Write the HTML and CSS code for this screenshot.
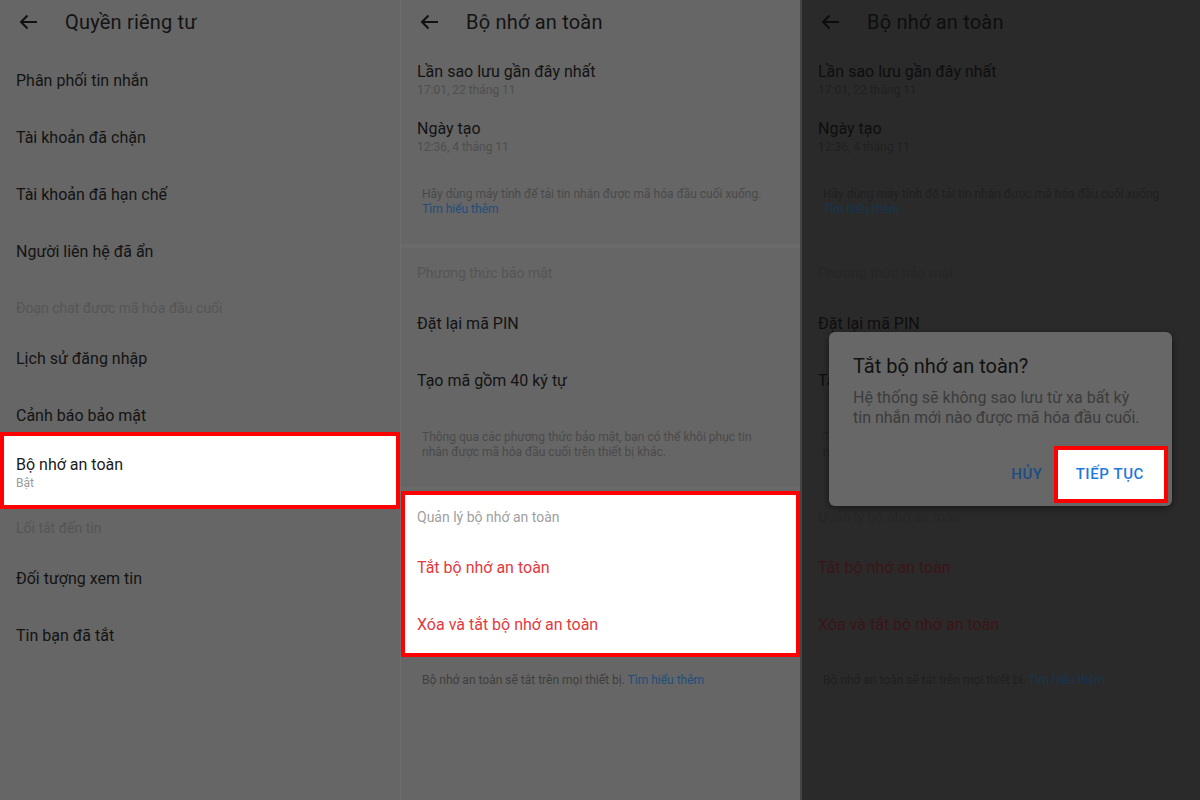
FILE: index.html
```html
<!DOCTYPE html>
<html lang="vi">
<head>
    <meta charset="UTF-8">
    <meta name="viewport" content="width=device-width, initial-scale=1.0">
    <title>Bộ nhớ an toàn</title>
    <link rel="stylesheet" href="styles.css">
</head>
<body>
    <div class="screens">

        <!-- Step 1: privacy list -->
        <section class="panel">
            <header class="topbar">
                <svg class="back" width="24" height="24" viewBox="0 0 24 24"><path d="M21 12H5M11.5 5.5L5 12l6.5 6.5" fill="none" stroke="currentColor" stroke-width="2"/></svg>
                <h1>Quyền riêng tư</h1>
            </header>
            <div class="settings">
                <div class="row">Phân phối tin nhắn</div>
                <div class="row">Tài khoản đã chặn</div>
                <div class="row">Tài khoản đã hạn chế</div>
                <div class="row">Người liên hệ đã ẩn</div>
                <div class="group">Đoạn chat được mã hóa đầu cuối</div>
                <div class="row">Lịch sử đăng nhập</div>
                <div class="row short">Cảnh báo bảo mật</div>
                <div class="pick">
                    <div class="pick-title">Bộ nhớ an toàn</div>
                    <div class="pick-sub">Bật</div>
                </div>
                <div class="group tight">Lối tắt đến tin</div>
                <div class="row">Đối tượng xem tin</div>
                <div class="row">Tin bạn đã tắt</div>
            </div>
        </section>

        <!-- Step 2: secure storage -->
        <section class="panel">
            <header class="topbar">
                <svg class="back" width="24" height="24" viewBox="0 0 24 24"><path d="M21 12H5M11.5 5.5L5 12l6.5 6.5" fill="none" stroke="currentColor" stroke-width="2"/></svg>
                <h1>Bộ nhớ an toàn</h1>
            </header>
            <div class="settings">
                <div class="entry">
                    <div class="name">Lần sao lưu gần đây nhất</div>
                    <div class="meta">17:01, 22 tháng 11</div>
                </div>
                <div class="entry">
                    <div class="name">Ngày tạo</div>
                    <div class="meta">12:36, 4 tháng 11</div>
                </div>
                <p class="note">Hãy dùng máy tính để tải tin nhắn được mã hóa đầu cuối xuống.<br><span class="link">Tìm hiểu thêm</span></p>
                <div class="rule"></div>
                <div class="group">Phương thức bảo mật</div>
                <div class="row">Đặt lại mã PIN</div>
                <div class="row">Tạo mã gồm 40 ký tự</div>
                <p class="note">Thông qua các phương thức bảo mật, bạn có thể khôi phục tin<br>nhắn được mã hóa đầu cuối trên thiết bị khác.</p>
                <div class="rule"></div>
                <div class="box marked">
                    <div class="group">Quản lý bộ nhớ an toàn</div>
                    <div class="row danger">Tắt bộ nhớ an toàn</div>
                    <div class="row danger">Xóa và tắt bộ nhớ an toàn</div>
                </div>
                <p class="foot">Bộ nhớ an toàn sẽ tắt trên mọi thiết bị. <span class="link">Tìm hiểu thêm</span></p>
            </div>
        </section>

        <!-- Step 3: confirm dialog -->
        <section class="panel dim">
            <header class="topbar">
                <svg class="back" width="24" height="24" viewBox="0 0 24 24"><path d="M21 12H5M11.5 5.5L5 12l6.5 6.5" fill="none" stroke="currentColor" stroke-width="2"/></svg>
                <h1>Bộ nhớ an toàn</h1>
            </header>
            <div class="settings">
                <div class="entry">
                    <div class="name">Lần sao lưu gần đây nhất</div>
                    <div class="meta">17:01, 22 tháng 11</div>
                </div>
                <div class="entry">
                    <div class="name">Ngày tạo</div>
                    <div class="meta">12:36, 4 tháng 11</div>
                </div>
                <p class="note">Hãy dùng máy tính để tải tin nhắn được mã hóa đầu cuối xuống.<br><span class="link">Tìm hiểu thêm</span></p>
                <div class="rule"></div>
                <div class="group">Phương thức bảo mật</div>
                <div class="row">Đặt lại mã PIN</div>
                <div class="row">Tạo mã gồm 40 ký tự</div>
                <p class="note">Thông qua các phương thức bảo mật, bạn có thể khôi phục tin<br>nhắn được mã hóa đầu cuối trên thiết bị khác.</p>
                <div class="rule"></div>
                <div class="box">
                    <div class="group">Quản lý bộ nhớ an toàn</div>
                    <div class="row danger">Tắt bộ nhớ an toàn</div>
                    <div class="row danger">Xóa và tắt bộ nhớ an toàn</div>
                </div>
                <p class="foot">Bộ nhớ an toàn sẽ tắt trên mọi thiết bị. <span class="link">Tìm hiểu thêm</span></p>
            </div>

            <div class="dialog">
                <h2>Tắt bộ nhớ an toàn?</h2>
                <p>Hệ thống sẽ không sao lưu từ xa bất kỳ<br>tin nhắn mới nào được mã hóa đầu cuối.</p>
                <div class="actions">
                    <button class="btn">Hủy</button>
                    <button class="btn primary">Tiếp tục</button>
                </div>
            </div>
        </section>

    </div>
</body>
</html>
```

FILE: styles.css
```css
* {
    margin: 0;
    padding: 0;
    box-sizing: border-box;
}

body {
    font-family: Roboto, "Noto Sans", "Liberation Sans", sans-serif;
    width: 1200px;
    height: 800px;
    overflow: hidden;
    background: #666;
}

.screens {
    display: flex;
    height: 800px;
}

.panel {
    position: relative;
    flex: none;
    width: 400px;
    height: 800px;
    background: #666;
    color: #131313;
}

.panel + .panel {
    border-left: 1px solid #6e6e6e;
}

/* header */
.topbar {
    display: flex;
    align-items: center;
    gap: 25px;
    height: 44px;
    padding-left: 16px;
}

.back {
    display: block;
    color: #111;
}

.topbar h1 {
    font-size: 20px;
    font-weight: 400;
    line-height: 24px;
    letter-spacing: 0.2px;
}

/* lists */
.settings {
    padding-top: 8px;
}

.row {
    display: flex;
    align-items: center;
    height: 57px;
    padding: 0 16px;
    font-size: 16px;
}

.row.short {
    height: 45px;
    padding-top: 11px;
}

.group {
    padding: 20px 16px 14px;
    font-size: 14px;
    line-height: 16px;
    color: #555;
}

.group.tight {
    padding-top: 11px;
}

.rule + .group {
    padding-top: 17px;
}

.pick {
    background: #fff;
    border: 4px solid #f00;
    padding: 19px 12px 14px;
}

.pick-title {
    font-size: 16px;
    line-height: 20px;
    color: #1a1a1a;
}

.pick-sub {
    font-size: 12px;
    line-height: 16px;
    color: #9a9a9a;
}

.entry {
    padding: 10px 16px 11px;
}

.entry .name {
    font-size: 16px;
    line-height: 20px;
}

.entry .meta {
    font-size: 12px;
    line-height: 16px;
    color: #4e4e4e;
}

.note {
    padding: 21px 16px 27px 21px;
    font-size: 12px;
    line-height: 15px;
    color: #4a4a4a;
    white-space: nowrap;
}

.link {
    color: #1f4e7c;
}

.rule {
    height: 4px;
    background: #6a6a6a;
}

.box {
    border: 4px solid transparent;
}

.box .row,
.box .group {
    padding-left: 12px;
}

.box .group {
    padding-top: 14px;
}

.box.marked {
    background: #fff;
    border-color: #f00;
}

.box.marked .group {
    color: #a0a0a0;
}

.row.danger {
    color: #e33a40;
}

.foot {
    padding: 16px 16px 0 21px;
    font-size: 12px;
    line-height: 15px;
    color: #3e3e3e;
}

/* dimmed third screen */
.panel.dim {
    background: #2a2a2a;
    color: #0e0e0e;
    border-left: 2px solid #454545;
}

.dim .back {
    color: #0c0c0c;
}

.dim .group {
    color: #262626;
}

.dim .rule {
    background: #2a2a2a;
}

.dim .entry .meta,
.dim .note,
.dim .foot {
    color: #202020;
}

.dim .link {
    color: #173451;
}

.dim .row.danger {
    color: #3c1517;
}

/* confirm dialog */
.dialog {
    position: absolute;
    left: 27px;
    top: 332px;
    width: 343px;
    padding: 22px 4px 3px 24px;
    background: #676767;
    border-radius: 6px;
    box-shadow: 0 2px 6px rgba(0, 0, 0, 0.45);
}

.dialog h2 {
    font-size: 20px;
    font-weight: 400;
    line-height: 24px;
    color: #111;
}

.dialog p {
    margin-top: 10px;
    font-size: 16px;
    line-height: 20px;
    color: #3c3c3c;
}

.actions {
    display: flex;
    justify-content: flex-end;
    align-items: center;
    gap: 11px;
    margin-top: 18px;
}

.btn {
    font-family: inherit;
    font-size: 15px;
    font-weight: 500;
    line-height: 17px;
    letter-spacing: 0.6px;
    text-transform: uppercase;
    background: none;
    border: none;
    color: #1b4c84;
    cursor: pointer;
}

.btn.primary {
    padding: 16px 20px 16px 18px;
    background: #fff;
    border: 4px solid #f00;
    color: #1d79dc;
}
```
